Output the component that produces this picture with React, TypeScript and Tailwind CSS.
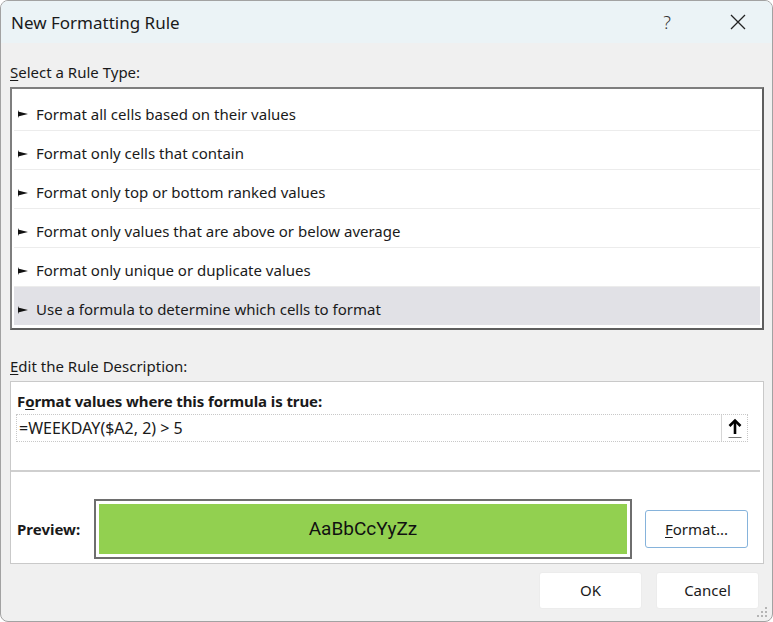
import React from "react";

const rows = [
  "Format all cells based on their values",
  "Format only cells that contain",
  "Format only top or bottom ranked values",
  "Format only values that are above or below average",
  "Format only unique or duplicate values",
  "Use a formula to determine which cells to format",
];

export default function App() {
  const font = { fontFamily: '"Noto Sans", "Open Sans", sans-serif' };
  return (
    <div className="w-[773px] h-[622px] bg-white" style={font}>
      <div className="relative w-full h-full border border-[#a2a2a2] rounded-[8px] overflow-hidden bg-[#f0f0f0] flex flex-col text-[#1a1a1a]">
        {/* Title bar */}
        <div className="h-[42px] shrink-0 bg-[#ebf3f6] flex items-center pl-[10px]">
          <span className="text-[17px] leading-none">New Formatting Rule</span>
          <span className="ml-auto text-[18px] leading-none text-[#333] font-light">?</span>
          <svg className="ml-[59px] mr-[26px]" width="16" height="16" viewBox="0 0 16 16">
            <path d="M1 1 L15 15 M15 1 L1 15" stroke="#222" strokeWidth="1.3" />
          </svg>
        </div>

        {/* Body */}
        <div className="flex-1 flex flex-col pl-[9px] pr-[8px]">
          <div className="mt-[19px] h-[20px] leading-[20px] text-[15px]">
            <span className="underline underline-offset-2">S</span>elect a Rule Type:
          </div>
          <div className="mt-[5px] h-[243px] border-2 border-t-[#7e7e7e] border-l-[#7e7e7e] border-r-[#5e5e5e] border-b-[#5e5e5e] bg-white pt-[2px] px-[2px]">
            {rows.map((r, i) => (
              <div
                key={r}
                className={
                  "h-[39px] pt-[7px] flex items-center pl-[4px] text-[15px] " +
                  (i > 0 ? "border-t border-[#ececec] " : "") +
                  (i === 5 ? "bg-[#e1e1e6]" : "")
                }
              >
                <svg className="mr-[8px]" width="10" height="8" viewBox="0 0 10 8">
                  <path d="M0 1.5 L10 4 L0 6.5 Z" fill="#111" />
                  <path d="M0 0.5 L0 7.5" stroke="#111" strokeWidth="1" />
                </svg>
                <span>{r}</span>
              </div>
            ))}
          </div>

          <div className="mt-[26px] h-[20px] leading-[20px] text-[15px]">
            <span className="underline underline-offset-2">E</span>dit the Rule Description:
          </div>
          <div className="mt-[5px] h-[183px] border border-[#c9c9c9] bg-white flex flex-col">
            <div className="mt-[9px] ml-[6px] h-[20px] leading-[20px] text-[15px] font-bold tracking-[-0.1px]">
              F<span className="underline underline-offset-2">o</span>rmat values where this formula is true:
            </div>
            <div className="mt-[3px] ml-[5px] w-[732px] h-[28px] border border-dotted border-[#c8c8c8] flex items-center">
              <span className="pl-[2px] text-[16px]">=WEEKDAY($A2, 2) &gt; 5</span>
              <div className="ml-auto w-[26px] h-full border-l border-[#d6d6d6] flex items-center justify-center">
                <svg width="16" height="22" viewBox="0 0 16 22">
                  <path d="M8 3.5 L8 17" stroke="#000" strokeWidth="2.6" />
                  <path d="M2.5 9 L8 3.5 L13.5 9" stroke="#000" strokeWidth="2.6" fill="none" />
                  <path d="M1.5 20.5 L14.5 20.5" stroke="#777" strokeWidth="1" />
                </svg>
              </div>
            </div>
            <div className="mt-[28px] w-[749px] h-[2px] bg-[#cfcfcf]" />
            <div className="mt-[27px] flex items-center">
              <span className="ml-[6px] w-[77px] text-[15px] font-bold">Preview:</span>
              <div className="w-[538px] h-[60px] border-2 border-[#6e6e6e] bg-white p-[3px]">
                <div className="w-full h-full bg-[#92d050] flex items-center justify-center">
                  <span className="text-[19px] text-[#111]" style={{ fontFamily: 'Roboto, "Liberation Sans", sans-serif' }}>
                    AaBbCcYyZz
                  </span>
                </div>
              </div>
              <div className="ml-[13px] w-[103px] h-[38px] rounded-[3px] border border-[#86b3db] bg-white flex items-center justify-center text-[15px]">
                <span className="underline underline-offset-2">F</span>ormat...
              </div>
            </div>
          </div>

          <div className="mt-[8px] flex justify-end gap-[14px] pr-[5px]">
            <div className="w-[103px] h-[37px] bg-white rounded-[3px] border border-[#ececec] flex items-center justify-center text-[15px]">
              OK
            </div>
            <div className="w-[103px] h-[37px] bg-white rounded-[3px] border border-[#ececec] flex items-center justify-center text-[15px]">
              Cancel
            </div>
          </div>
        </div>

        {/* resize grip */}
        <svg className="absolute right-[4px] bottom-[3px]" width="11" height="11" viewBox="0 0 11 11">
          {[
            [8, 0],
            [4, 4], [8, 4],
            [0, 8], [4, 8], [8, 8],
          ].map(([x, y], i) => (
            <rect key={i} x={x} y={y} width="2" height="2" fill="#b5b5b5" />
          ))}
        </svg>
      </div>
    </div>
  );
}
